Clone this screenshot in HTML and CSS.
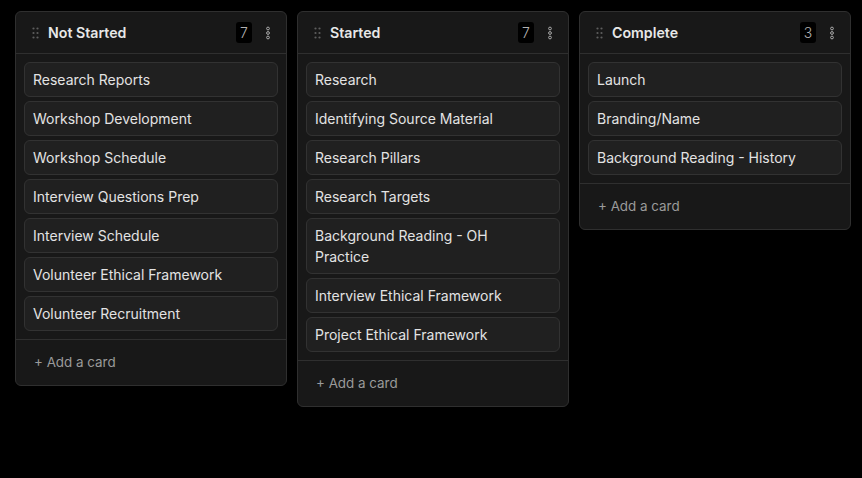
FILE: index.html
```html
<!DOCTYPE html>
<html>
<head>
<meta charset="utf-8">
<link rel="stylesheet" href="styles.css">
</head>
<body>
<div class="board">
  <section class="column">
    <header class="col-head">
      <svg class="grip" width="8" height="12" viewBox="0 0 8 12"><g fill="#5e5e5e"><circle cx="1.5" cy="1.5" r="1.1"/><circle cx="5.5" cy="1.5" r="1.1"/><circle cx="1.5" cy="6" r="1.1"/><circle cx="5.5" cy="6" r="1.1"/><circle cx="1.5" cy="10.5" r="1.1"/><circle cx="5.5" cy="10.5" r="1.1"/></g></svg>
      <h2 class="col-title">Not Started</h2>
      <span class="count">7</span>
      <svg class="menu" width="6" height="14" viewBox="0 0 6 14"><g fill="none" stroke="#aaa" stroke-width="1"><circle cx="3" cy="2.5" r="1.4"/><circle cx="3" cy="7" r="1.4"/><circle cx="3" cy="11.5" r="1.4"/></g></svg>
    </header>
    <div class="cards">
      <div class="card">Research Reports</div>
      <div class="card">Workshop Development</div>
      <div class="card">Workshop Schedule</div>
      <div class="card">Interview Questions Prep</div>
      <div class="card">Interview Schedule</div>
      <div class="card">Volunteer Ethical Framework</div>
      <div class="card">Volunteer Recruitment</div>
    </div>
    <footer class="col-foot">+ Add a card</footer>
  </section>
  <section class="column">
    <header class="col-head">
      <svg class="grip" width="8" height="12" viewBox="0 0 8 12"><g fill="#5e5e5e"><circle cx="1.5" cy="1.5" r="1.1"/><circle cx="5.5" cy="1.5" r="1.1"/><circle cx="1.5" cy="6" r="1.1"/><circle cx="5.5" cy="6" r="1.1"/><circle cx="1.5" cy="10.5" r="1.1"/><circle cx="5.5" cy="10.5" r="1.1"/></g></svg>
      <h2 class="col-title">Started</h2>
      <span class="count">7</span>
      <svg class="menu" width="6" height="14" viewBox="0 0 6 14"><g fill="none" stroke="#aaa" stroke-width="1"><circle cx="3" cy="2.5" r="1.4"/><circle cx="3" cy="7" r="1.4"/><circle cx="3" cy="11.5" r="1.4"/></g></svg>
    </header>
    <div class="cards">
      <div class="card">Research</div>
      <div class="card">Identifying Source Material</div>
      <div class="card">Research Pillars</div>
      <div class="card">Research Targets</div>
      <div class="card">Background Reading - OH Practice</div>
      <div class="card">Interview Ethical Framework</div>
      <div class="card">Project Ethical Framework</div>
    </div>
    <footer class="col-foot">+ Add a card</footer>
  </section>
  <section class="column">
    <header class="col-head">
      <svg class="grip" width="8" height="12" viewBox="0 0 8 12"><g fill="#5e5e5e"><circle cx="1.5" cy="1.5" r="1.1"/><circle cx="5.5" cy="1.5" r="1.1"/><circle cx="1.5" cy="6" r="1.1"/><circle cx="5.5" cy="6" r="1.1"/><circle cx="1.5" cy="10.5" r="1.1"/><circle cx="5.5" cy="10.5" r="1.1"/></g></svg>
      <h2 class="col-title">Complete</h2>
      <span class="count">3</span>
      <svg class="menu" width="6" height="14" viewBox="0 0 6 14"><g fill="none" stroke="#aaa" stroke-width="1"><circle cx="3" cy="2.5" r="1.4"/><circle cx="3" cy="7" r="1.4"/><circle cx="3" cy="11.5" r="1.4"/></g></svg>
    </header>
    <div class="cards">
      <div class="card">Launch</div>
      <div class="card">Branding/Name</div>
      <div class="card">Background Reading - History</div>
    </div>
    <footer class="col-foot">+ Add a card</footer>
  </section>
</div>
</body>
</html>
```

FILE: styles.css
```css
* { box-sizing: border-box; }
html, body { margin: 0; padding: 0; background: #000; overflow: hidden; }
body {
  font-family: Inter, "Liberation Sans", sans-serif;
  color: #e3e3e3;
}
.board {
  display: flex;
  align-items: flex-start;
  gap: 10px;
  padding: 11px 15px;
}
.column {
  flex: none;
  width: 272px;
  background: #181818;
  border: 1px solid #2f2f2f;
  border-radius: 6px;
  display: flex;
  flex-direction: column;
}
.col-head {
  height: 42px;
  display: flex;
  align-items: center;
  padding: 0 15px 0 16px;
  border-bottom: 1px solid #2f2f2f;
}
.grip { flex: none; margin-right: 8px; }
.col-title {
  margin: 0;
  flex: 1;
  font-size: 14.2px;
  font-weight: 600;
  color: #e8e8e8;
}
.count {
  background: #000;
  color: #b4b4b4;
  font-size: 14px;
  font-weight: 300;
  width: 16px;
  height: 21px;
  line-height: 21px;
  text-align: center;
  border-radius: 3px;
  margin-right: 13px;
}
.menu { flex: none; }
.cards {
  display: flex;
  flex-direction: column;
  gap: 4px;
  padding: 8px;
}
.card {
  background: #202020;
  border: 1px solid #323232;
  border-radius: 6px;
  padding: 6px 24px 6px 8px;
  font-size: 14px;
  line-height: 21px;
  color: #e3e3e3;
}
.col-foot {
  border-top: 1px solid #2f2f2f;
  height: 46px;
  line-height: 44px;
  padding-left: 18px;
  font-size: 13.4px;
  color: #9a9a9a;
}
```
